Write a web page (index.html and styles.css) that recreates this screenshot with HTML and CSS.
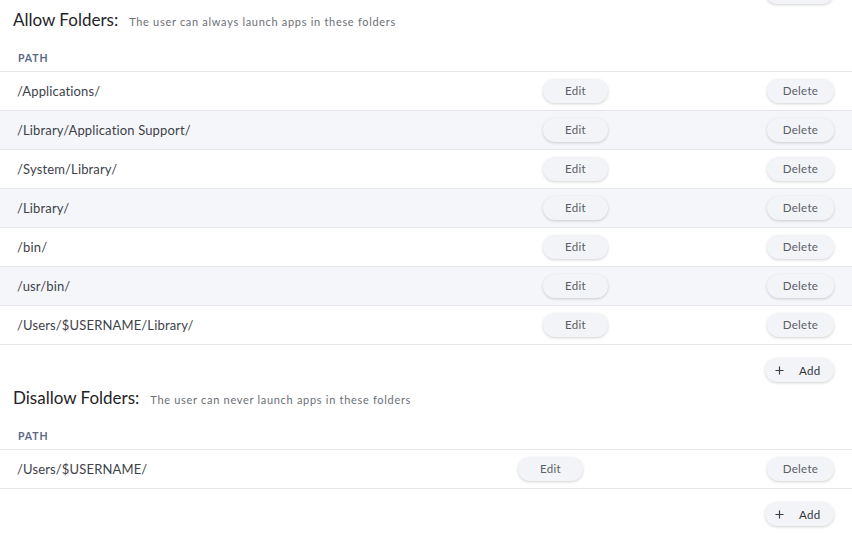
FILE: index.html
```html
<!DOCTYPE html>
<html>
<head>
<meta charset="utf-8">
<link rel="stylesheet" href="styles.css">
</head>
<body>
<div class="page">
  <div class="add-row add-row--stub">
    <button class="pill pill--add"><svg class="plus" viewBox="0 0 10 10"><path d="M5 0.5V9.5M0.5 5H9.5"/></svg><span>Add</span></button>
  </div>

  <section class="section">
    <div class="heading"><span class="title">Allow Folders:</span><span class="subtitle">The user can always launch apps in these folders</span></div>
    <div class="table table--allow">
      <div class="thead">PATH</div>
      <div class="row"><span class="path">/Applications/</span><button class="pill pill--edit">Edit</button><button class="pill pill--delete">Delete</button></div>
      <div class="row"><span class="path">/Library/Application Support/</span><button class="pill pill--edit">Edit</button><button class="pill pill--delete">Delete</button></div>
      <div class="row"><span class="path">/System/Library/</span><button class="pill pill--edit">Edit</button><button class="pill pill--delete">Delete</button></div>
      <div class="row"><span class="path">/Library/</span><button class="pill pill--edit">Edit</button><button class="pill pill--delete">Delete</button></div>
      <div class="row"><span class="path">/bin/</span><button class="pill pill--edit">Edit</button><button class="pill pill--delete">Delete</button></div>
      <div class="row"><span class="path">/usr/bin/</span><button class="pill pill--edit">Edit</button><button class="pill pill--delete">Delete</button></div>
      <div class="row"><span class="path">/Users/$USERNAME/Library/</span><button class="pill pill--edit">Edit</button><button class="pill pill--delete">Delete</button></div>
    </div>
    <div class="add-row">
      <button class="pill pill--add"><svg class="plus" viewBox="0 0 10 10"><path d="M5 0.5V9.5M0.5 5H9.5"/></svg><span>Add</span></button>
    </div>
  </section>

  <section class="section">
    <div class="heading"><span class="title">Disallow Folders:</span><span class="subtitle">The user can never launch apps in these folders</span></div>
    <div class="table table--disallow">
      <div class="thead">PATH</div>
      <div class="row"><span class="path">/Users/$USERNAME/</span><button class="pill pill--edit">Edit</button><button class="pill pill--delete">Delete</button></div>
    </div>
    <div class="add-row">
      <button class="pill pill--add"><svg class="plus" viewBox="0 0 10 10"><path d="M5 0.5V9.5M0.5 5H9.5"/></svg><span>Add</span></button>
    </div>
  </section>
</div>
</body>
</html>
```

FILE: styles.css
```css
* { box-sizing: border-box; }
html, body { margin: 0; padding: 0; background: #ffffff; }
body {
  font-family: "Lato", "Open Sans", "Liberation Sans", sans-serif;
  color: #333840;
  overflow: hidden;
  height: 541px;
}
.page { display: flex; flex-direction: column; }

.add-row {
  display: flex;
  justify-content: flex-end;
  padding: 13px 18px 0 0;
}
.add-row--stub { margin-top: -33px; }

.heading {
  display: flex;
  align-items: baseline;
  padding: 4px 0 0 13px;
  line-height: 24px;
  height: 28px;
}
.title { font-size: 17px; color: #1f2328; }
.subtitle { font-size: 11px; color: #6b6f76; margin-left: 11px; letter-spacing: 0.7px; }

.thead {
  padding: 18px 17px 5px 18px;
  line-height: 16px;
  font-size: 10.5px;
  font-weight: 700;
  letter-spacing: 0.9px;
  color: #5b6887;
  border-bottom: 1px solid #e4e6ea;
}
.row {
  display: grid;
  align-items: center;
  height: 39px;
  padding: 0 18px 1px 17px;
  border-bottom: 1px solid #e4e6ea;
}
.row:nth-child(odd) { background: #f5f6fa; }
.table--allow .row { grid-template-columns: 526px 65px 1fr 67px; }
.table--disallow .row { grid-template-columns: 501px 65px 1fr 67px; }
.pill--delete { grid-column: 4; }

.path { font-size: 13px; color: #3d4249; letter-spacing: 0.15px; }

.pill {
  font-family: inherit;
  border: none;
  height: 24px;
  border-radius: 12px;
  background: #f3f4f8;
  box-shadow: 0 1px 3px rgba(0, 0, 0, 0.18);
  font-size: 11.5px;
  letter-spacing: 0.3px;
  color: #5a5e66;
  padding: 0;
  cursor: pointer;
}
.pill--edit { width: 65px; }
.pill--delete { width: 67px; }
.pill--add {
  width: 69px;
  display: flex;
  align-items: center;
  justify-content: flex-start;
  padding-left: 10px;
  gap: 15px;
  color: #30343a;
}
.plus { width: 9px; height: 9px; fill: none; stroke: #3a3e45; stroke-width: 1.3; }
```
